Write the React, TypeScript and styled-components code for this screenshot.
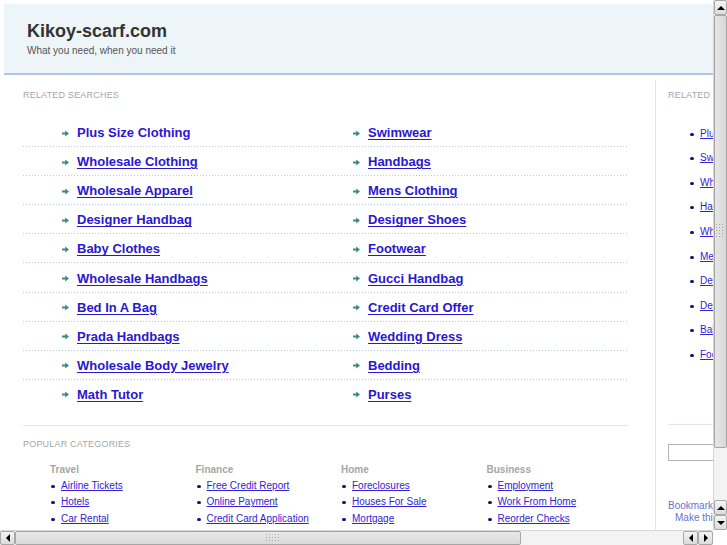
import React from "react";
import styled, { createGlobalStyle, css } from "styled-components";

const GlobalStyle = createGlobalStyle`
  html, body {
    margin: 0;
    padding: 0;
    overflow: hidden;
    background: #ffffff;
  }
  body {
    font-family: "Liberation Sans", Arial, sans-serif;
  }
`;

const related = [
  ["Plus Size Clothing", "Swimwear"],
  ["Wholesale Clothing", "Handbags"],
  ["Wholesale Apparel", "Mens Clothing"],
  ["Designer Handbag", "Designer Shoes"],
  ["Baby Clothes", "Footwear"],
  ["Wholesale Handbags", "Gucci Handbag"],
  ["Bed In A Bag", "Credit Card Offer"],
  ["Prada Handbags", "Wedding Dress"],
  ["Wholesale Body Jewelry", "Bedding"],
  ["Math Tutor", "Purses"],
];

const categories = [
  { title: "Travel", links: ["Airline Tickets", "Hotels", "Car Rental"] },
  { title: "Finance", links: ["Free Credit Report", "Online Payment", "Credit Card Application"] },
  { title: "Home", links: ["Foreclosures", "Houses For Sale", "Mortgage"] },
  { title: "Business", links: ["Employment", "Work From Home", "Reorder Checks"] },
];

const sideLinks = [
  "Plus Size Clothing",
  "Swimwear",
  "Wholesale Clothing",
  "Handbags",
  "Wholesale Apparel",
  "Mens Clothing",
  "Designer Handbag",
  "Designer Shoes",
  "Baby Clothes",
  "Footwear",
];

export default function App() {
  return (
    <>
      <GlobalStyle />
      <Window>
        <Viewport>
          <Page>
            <Header>
              <SiteName>Kikoy-scarf.com</SiteName>
              <Tagline>What you need, when you need it</Tagline>
            </Header>
            <Columns>
              <Main>
                <SectionTitle>Related Searches</SectionTitle>
                <RelatedList>
                  {related.map(([a, b], i) => (
                    <RelatedRow key={a} $last={i === related.length - 1}>
                      <RelatedCell>
                        <Arrow />
                        <BigLink href="#" $plain={i === 0}>
                          {a}
                        </BigLink>
                      </RelatedCell>
                      <RelatedCell>
                        <Arrow />
                        <BigLink href="#">{b}</BigLink>
                      </RelatedCell>
                    </RelatedRow>
                  ))}
                </RelatedList>
                <Divider />
                <SectionTitle $top={13}>Popular Categories</SectionTitle>
                <CategoryGrid>
                  {categories.map((c) => (
                    <Category key={c.title}>
                      <CategoryTitle>{c.title}</CategoryTitle>
                      {c.links.map((l) => (
                        <SmallItem key={l}>
                          <Dot />
                          <SmallLink href="#">{l}</SmallLink>
                        </SmallItem>
                      ))}
                    </Category>
                  ))}
                </CategoryGrid>
              </Main>
              <Sidebar>
                <SectionTitle>Related Searches</SectionTitle>
                <SideList>
                  {sideLinks.map((l) => (
                    <SideItem key={l}>
                      <Dot />
                      <SmallLink href="#">{l}</SmallLink>
                    </SideItem>
                  ))}
                </SideList>
                <SideDivider />
                <SearchBox />
                <Bookmark>Bookmark this page</Bookmark>
                <Bookmark $indent>Make this your homepage</Bookmark>
              </Sidebar>
            </Columns>
          </Page>
        </Viewport>

        <VScroll>
          <ScrollButton $dir="up" />
          <VThumb>
            <Grip $vertical />
          </VThumb>
          <Track />
          <ScrollButton $dir="up" />
          <ScrollButton $dir="down" />
        </VScroll>

        <HScroll>
          <ScrollButton $dir="left" />
          <HThumb>
            <Grip />
          </HThumb>
          <Track />
          <ScrollButton $dir="left" />
          <ScrollButton $dir="right" />
        </HScroll>
        <Corner />
      </Window>
    </>
  );
}

function Arrow() {
  return (
    <ArrowIcon width="7" height="7" viewBox="0 0 7 7">
      <path d="M0 2.6h3.2V0.5L7 3.5 3.2 6.5V4.4H0z" fill="#3d8a82" />
    </ArrowIcon>
  );
}

function Grip({ $vertical }: { $vertical?: boolean }) {
  const cols = $vertical ? 3 : 5;
  const rows = $vertical ? 5 : 3;
  const dots = [];
  for (let r = 0; r < rows; r++)
    for (let c = 0; c < cols; c++)
      dots.push(<rect key={r + "-" + c} x={c * 3} y={r * 3} width="1" height="1" fill="#a9a9a9" />);
  return (
    <svg width={cols * 3} height={rows * 3} viewBox={`0 0 ${cols * 3} ${rows * 3}`}>
      {dots}
    </svg>
  );
}

const Window = styled.div`
  width: 727px;
  height: 545px;
  display: grid;
  grid-template-columns: 713px 14px;
  grid-template-rows: 530px 15px;
  overflow: hidden;
`;

const Viewport = styled.div`
  overflow: hidden;
  position: relative;
`;

const Page = styled.div`
  width: 900px;
  padding: 4px 0 0 4px;
`;

const Header = styled.div`
  height: 53px;
  padding: 16px 0 0 23px;
  margin-bottom: -1px;
  background: #eef5f8;
  border-bottom: 2px solid #aec6e6;
`;

const SiteName = styled.div`
  font-size: 18px;
  font-weight: bold;
  line-height: 22px;
  color: #333333;
`;

const Tagline = styled.div`
  margin-top: 3px;
  font-size: 10px;
  line-height: 12px;
  color: #555555;
`;

const Columns = styled.div`
  display: flex;
  margin-top: 6px;
`;

const Main = styled.div`
  width: 605px;
  margin-left: 19px;
`;

const SectionTitle = styled.div<{ $top?: number }>`
  margin-top: ${(p) => p.$top ?? 10}px;
  font-size: 9px;
  line-height: 11px;
  text-transform: uppercase;
  letter-spacing: 0.2px;
  color: #a6a6a6;
  white-space: nowrap;
`;

const RelatedList = styled.div`
  margin-top: 17px;
`;

const RelatedRow = styled.div<{ $last?: boolean }>`
  display: grid;
  grid-template-columns: 291px 1fr;
  align-items: center;
  height: 29.1px;
  box-sizing: border-box;
  padding-left: 39px;
  ${(p) =>
    !p.$last &&
    css`
      background-image: repeating-linear-gradient(90deg, #b3cbe9 0 1px, transparent 1px 3px);
      background-size: 100% 1px;
      background-repeat: no-repeat;
      background-position: left bottom;
    `}
`;

const RelatedCell = styled.div`
  display: flex;
  align-items: center;
  gap: 8px;
`;

const ArrowIcon = styled.svg`
  flex: none;
  margin-top: 1px;
`;

const BigLink = styled.a<{ $plain?: boolean }>`
  font-size: 13px;
  font-weight: bold;
  color: #2a17d0;
  text-decoration: ${(p) => (p.$plain ? "none" : "underline")};
  text-underline-offset: 2px;
  white-space: nowrap;
`;

const Divider = styled.div`
  margin-top: 16px;
  border-top: 1px solid #dfe8f2;
`;

const CategoryGrid = styled.div`
  display: grid;
  grid-template-columns: repeat(4, 145.5px);
  padding-left: 27px;
  margin-top: 13px;
`;

const Category = styled.div`
  display: flex;
  flex-direction: column;
`;

const CategoryTitle = styled.div`
  font-size: 10px;
  font-weight: bold;
  line-height: 13px;
  color: #a6a6a6;
  margin-bottom: 1px;
`;

const SmallItem = styled.div`
  display: flex;
  align-items: center;
  gap: 6px;
  height: 16.5px;
  padding-left: 1px;
`;

const Dot = styled.span`
  flex: none;
  width: 4px;
  height: 3px;
  border-radius: 2px;
  background: #1a1670;
  margin-top: 2px;
`;

const SmallLink = styled.a`
  font-size: 10px;
  color: #3322d6;
  text-decoration: underline;
  white-space: nowrap;
`;

const Sidebar = styled.div`
  width: 240px;
  margin-left: 27px;
  padding-left: 12px;
  border-left: 1px solid #dfe7f3;
  min-height: 460px;
`;

const SideList = styled.div`
  margin-top: 20px;
  padding-left: 21px;
  display: flex;
  flex-direction: column;
`;

const SideItem = styled(SmallItem)`
  height: 24.55px;
`;

const SideDivider = styled.div`
  margin-top: 58px;
  border-top: 1px solid #dfe8f2;
`;

const SearchBox = styled.div`
  margin-top: 19px;
  width: 160px;
  height: 15px;
  border: 1px solid #b3b3b3;
  background: #ffffff;
`;

const Bookmark = styled.div<{ $indent?: boolean }>`
  font-size: 10px;
  line-height: 12px;
  color: #6f6fc8;
  white-space: nowrap;
  margin-left: ${(p) => (p.$indent ? "7px" : "0")};
  ${(p) =>
    !p.$indent &&
    css`
      margin-top: 39px;
    `}
`;

const VScroll = styled.div`
  display: flex;
  flex-direction: column;
  background: #f1f1f1;
  border-left: 1px solid #d6d6d6;
`;

const HScroll = styled.div`
  display: flex;
  background: #f1f1f1;
  border-top: 1px solid #d6d6d6;
`;

const Corner = styled.div`
  background: #ffffff;
`;

const Track = styled.div`
  flex: 1;
  background-color: #f3f3f3;
  background-image: radial-gradient(#e2e2e2 0.6px, transparent 0.7px);
  background-size: 2px 2px;
`;

const thumbBase = css`
  display: flex;
  align-items: center;
  justify-content: center;
  background: linear-gradient(#e9e9e9, #d9d9d9);
  border: 1px solid #a5a5a5;
  border-radius: 2px;
  box-sizing: border-box;
`;

const VThumb = styled.div`
  ${thumbBase}
  height: 433px;
  background: linear-gradient(90deg, #e6e6e6, #d8d8d8);
`;

const HThumb = styled.div`
  ${thumbBase}
  width: 506px;
  padding-left: 10px;
`;

const arrowShapes = {
  up: css`
    border-left: 4px solid transparent;
    border-right: 4px solid transparent;
    border-bottom: 4px solid #000;
  `,
  down: css`
    border-left: 4px solid transparent;
    border-right: 4px solid transparent;
    border-top: 4px solid #000;
  `,
  left: css`
    border-top: 4px solid transparent;
    border-bottom: 4px solid transparent;
    border-right: 4px solid #000;
  `,
  right: css`
    border-top: 4px solid transparent;
    border-bottom: 4px solid transparent;
    border-left: 4px solid #000;
  `,
};

const ScrollButton = styled.div<{ $dir: "up" | "down" | "left" | "right" }>`
  flex: none;
  box-sizing: border-box;
  width: ${(p) => (p.$dir === "left" || p.$dir === "right" ? "15px" : "13px")};
  height: ${(p) => (p.$dir === "left" || p.$dir === "right" ? "14px" : "15px")};
  display: flex;
  align-items: center;
  justify-content: center;
  background: linear-gradient(#f4f4f4, #dcdcdc);
  border: 1px solid #a8a8a8;
  border-radius: 2px;
  &::after {
    content: "";
    width: 0;
    height: 0;
    ${(p) => arrowShapes[p.$dir]}
  }
`;
